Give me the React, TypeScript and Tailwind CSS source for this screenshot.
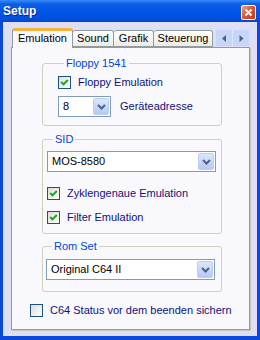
import { ReactNode } from 'react';

const Check = ({ checked }: { checked: boolean }) => (
  <span className="w-[13px] h-[13px] shrink-0 border border-[#1C5180] bg-[linear-gradient(135deg,#DCDCD7,#FFFFFF)] flex items-center justify-center">
    {checked && (
      <svg width="9" height="9" viewBox="0 0 9 9">
        <polyline points="1.2,4 3.5,6.4 7.8,2" stroke="#21A121" strokeWidth="2" fill="none" />
      </svg>
    )}
  </span>
);

const Chevron = () => (
  <svg width="9" height="6" viewBox="0 0 9 6">
    <polyline points="1,1 4.5,4.5 8,1" stroke="#4D6185" strokeWidth="2" fill="none" />
  </svg>
);

const Combo = ({ value, className }: { value: string; className: string }) => (
  <div className={`h-[21px] border border-[#7F9DB9] bg-white flex items-center p-px ${className}`}>
    <span className="flex-1 pl-[3px] text-black">{value}</span>
    <span className="w-[16px] h-full rounded-[2px] bg-[linear-gradient(#DCE6FC,#B5C9F7)] border border-[#BCCDF5] flex items-center justify-center">
      <Chevron />
    </span>
  </div>
);

const Group = ({ label, className, children }: { label: string; className: string; children: ReactNode }) => (
  <fieldset className={`w-[180px] ml-[30px] border border-[#D0D0BF] rounded-[3px] ${className}`}>
    <legend className="ml-[6px] px-[2px] leading-[14px] text-[#0046D5]">{label}</legend>
    {children}
  </fieldset>
);

const CheckRow = ({ label, checked, className }: { label: string; checked: boolean; className: string }) => (
  <div className={`h-[13px] flex items-center gap-[7px] text-[#10107A] ${className}`}>
    <Check checked={checked} />
    <span>{label}</span>
  </div>
);

const tabs = [
  { label: 'Sound', w: 'w-[41px]' },
  { label: 'Grafik', w: 'w-[40px]' },
  { label: 'Steuerung', w: 'w-[59px]' },
];

export default function App() {
  return (
    <div className="w-[260px] h-[340px] bg-[#0A48DC] flex flex-col font-['Liberation_Sans',Arial,sans-serif] text-[11px] leading-[13px] select-none">
      <div className="h-[22px] shrink-0 flex items-center justify-between pl-[3px] pr-[4px] bg-[linear-gradient(to_bottom,#3B8CF8_0%,#0A5EEA_18%,#0055E5_55%,#0050DE_85%,#0744C8_100%)]">
        <span className="text-white font-bold text-[12px] [text-shadow:1px_1px_0_#0A2A8A]">Setup</span>
        <span className="w-[15px] h-[15px] mt-[2px] rounded-[2px] border border-white bg-[linear-gradient(135deg,#F2A48A,#E2562F_45%,#C8381A)] flex items-center justify-center">
          <svg width="9" height="9" viewBox="0 0 9 9">
            <path d="M1.5 1.5 L7.5 7.5 M7.5 1.5 L1.5 7.5" stroke="white" strokeWidth="2" />
          </svg>
        </span>
      </div>
      <div className="flex-1 mx-[3px] mb-[4px] bg-[#DEDEF6] flex flex-col pt-[6px] pl-[8px] pr-[7px] pb-[6px]">
        <div className="flex items-end h-[20px] -mb-px relative z-10 pl-px">
          <div className="w-[61px] h-[20px] bg-[#F9F9FD] border-x border-[#919B9C] border-t-[3px] border-t-[#F7B23B] rounded-t-[3px] flex items-center justify-center text-black pb-[2px]">
            Emulation
          </div>
          {tabs.map((t) => (
            <div
              key={t.label}
              className={`${t.w} h-[17px] mb-px bg-[linear-gradient(#FFFFFF,#ECEBE6)] border border-[#919B9C] border-l-0 rounded-t-[3px] flex items-center justify-center text-black`}
            >
              {t.label}
            </div>
          ))}
          <div className="ml-[3px] mb-[2px] w-[33px] h-[16px] flex">
            <span className="flex-1 bg-[#C6D6F8] flex items-center justify-center border-r border-[#DDE6FA]">
              <svg width="5" height="7" viewBox="0 0 5 7"><polygon points="4,0 0,3.5 4,7" fill="#4D6185" /></svg>
            </span>
            <span className="flex-1 bg-[#C6D6F8] flex items-center justify-center">
              <svg width="5" height="7" viewBox="0 0 5 7"><polygon points="0.5,0 4.5,3.5 0.5,7" fill="#4D6185" /></svg>
            </span>
          </div>
        </div>
        <div className="w-[239px] flex-1 bg-[#F9F9FD] border border-[#919B9C] shadow-[1px_1px_0_#C9C7BA,2px_2px_0_#E2E0D5] flex flex-col">
          <Group label="Floppy 1541" className="mt-[8px] pb-[8px] pl-[15px]">
            <CheckRow label="Floppy Emulation" checked className="mt-[6px]" />
            <div className="flex items-center mt-[7px] text-[#10107A]">
              <Combo value="8" className="w-[53px] h-[20px]" />
              <span className="ml-[9px]">Geräteadresse</span>
            </div>
          </Group>
          <Group label="SID" className="mt-[6px] pb-[9px] pl-[4px]">
            <Combo value="MOS-8580" className="w-[169px] mt-[5px]" />
            <CheckRow label="Zyklengenaue Emulation" checked className="mt-[15px] gap-[6px]" />
            <CheckRow label="Filter Emulation" checked className="mt-[11px]" />
          </Group>
          <Group label="Rom Set" className="mt-[5px] pb-[11px] pl-[3px]">
            <Combo value="Original C64 II" className="w-[169px] mt-[6px]" />
          </Group>
          <CheckRow label="C64 Status vor dem beenden sichern" checked={false} className="mt-[12px] ml-[18px]" />
        </div>
      </div>
    </div>
  );
}
